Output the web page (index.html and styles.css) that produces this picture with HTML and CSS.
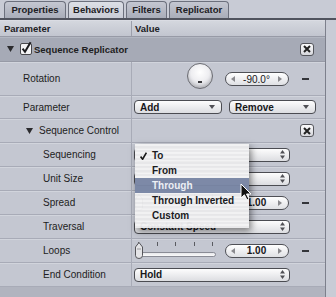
FILE: index.html
```html
<!DOCTYPE html>
<html lang="en">
<head>
    <meta charset="UTF-8">
    <meta name="viewport" content="width=device-width, initial-scale=1.0">
    <title>Behaviors Inspector</title>
    <link rel="stylesheet" href="styles.css">
</head>
<body>
    <div class="tabs">
        <div class="tab tab-properties">Properties</div>
        <div class="tab tab-behaviors active">Behaviors</div>
        <div class="tab tab-filters">Filters</div>
        <div class="tab tab-replicator">Replicator</div>
    </div>

    <div class="inspector">
        <div class="table">
            <div class="row header">
                <div class="label">Parameter</div>
                <div class="value">Value</div>
            </div>

            <div class="row group">
                <div class="label level-0">
                    <svg class="disclosure" width="7" height="6" viewBox="0 0 7 6"><polygon points="0,0 7,0 3.5,6" fill="#2b2b2e"/></svg>
                    <svg class="checkbox" width="12" height="14" viewBox="0 0 12 14">
                        <rect x="0.5" y="2.5" width="11" height="11" rx="1.5" fill="#f3f3f5" stroke="#48484c"/>
                        <path d="M2.6 7.6 L5 10.8 L10.6 1.2" stroke="#1b1b1e" stroke-width="2" fill="none"/>
                    </svg>
                    <span class="bold">Sequence Replicator</span>
                </div>
                <div class="value">
                    <span class="xbtn"><svg width="8" height="8" viewBox="0 0 8 8"><path d="M1 1L7 7M7 1L1 7" stroke="#222" stroke-width="2"/></svg></span>
                </div>
            </div>

            <div class="row rotation">
                <div class="label level-1">Rotation</div>
                <div class="value">
                    <div class="dial"><span class="dial-mark"></span></div>
                    <div class="field field-rotation">
                        <svg width="4" height="6" viewBox="0 0 4 6"><polygon points="4,0 4,6 0,3" fill="#8a8a8e"/></svg>
                        <span>-90.0°</span>
                        <svg width="4" height="6" viewBox="0 0 4 6"><polygon points="0,0 0,6 4,3" fill="#8a8a8e"/></svg>
                    </div>
                    <span class="minus"></span>
                </div>
            </div>

            <div class="row short">
                <div class="label level-1">Parameter</div>
                <div class="value">
                    <div class="popup popup-add">
                        <span>Add</span>
                        <svg width="6" height="4" viewBox="0 0 6 4"><polygon points="0,0 6,0 3,4" fill="#505055"/></svg>
                    </div>
                    <div class="popup popup-remove">
                        <span>Remove</span>
                        <svg width="6" height="4" viewBox="0 0 6 4"><polygon points="0,0 6,0 3,4" fill="#505055"/></svg>
                    </div>
                </div>
            </div>

            <div class="row">
                <div class="label level-2">
                    <svg class="disclosure" width="7" height="6" viewBox="0 0 7 6"><polygon points="0,0 7,0 3.5,6" fill="#2b2b2e"/></svg>
                    <span>Sequence Control</span>
                </div>
                <div class="value">
                    <span class="xbtn"><svg width="8" height="8" viewBox="0 0 8 8"><path d="M1 1L7 7M7 1L1 7" stroke="#222" stroke-width="2"/></svg></span>
                </div>
            </div>

            <!-- the values of these two popups sit under the open menu -->
            <div class="row">
                <div class="label level-3">Sequencing</div>
                <div class="value">
                    <div class="popup popup-wide">
                        <span></span>
                        <svg width="5" height="9" viewBox="0 0 5 9"><polygon points="0,3.5 5,3.5 2.5,0" fill="#505055"/><polygon points="0,5.5 5,5.5 2.5,9" fill="#505055"/></svg>
                    </div>
                </div>
            </div>

            <div class="row">
                <div class="label level-3">Unit Size</div>
                <div class="value">
                    <div class="popup popup-wide">
                        <span></span>
                        <svg width="5" height="9" viewBox="0 0 5 9"><polygon points="0,3.5 5,3.5 2.5,0" fill="#505055"/><polygon points="0,5.5 5,5.5 2.5,9" fill="#505055"/></svg>
                    </div>
                </div>
            </div>

            <div class="row">
                <div class="label level-3">Spread</div>
                <div class="value">
                    <div class="slider">
                        <div class="ticks"><i></i><i></i><i></i><i></i><i></i></div>
                        <div class="track"></div>
                        <svg class="knob" width="8" height="17" viewBox="0 0 8 17">
                            <path d="M4 0.5 L7.5 5 V13.5 Q7.5 16.5 4 16.5 Q0.5 16.5 0.5 13.5 V5 Z" fill="#e4e4e7" stroke="#55555a"/>
                        </svg>
                    </div>
                    <div class="field field-slider">
                        <svg width="4" height="6" viewBox="0 0 4 6"><polygon points="4,0 4,6 0,3" fill="#8a8a8e"/></svg>
                        <span class="bold">1.00</span>
                        <svg width="4" height="6" viewBox="0 0 4 6"><polygon points="0,0 0,6 4,3" fill="#8a8a8e"/></svg>
                    </div>
                    <span class="minus"></span>
                </div>
            </div>

            <div class="row">
                <div class="label level-3">Traversal</div>
                <div class="value">
                    <div class="popup popup-wide">
                        <span>Constant Speed</span>
                        <svg width="5" height="9" viewBox="0 0 5 9"><polygon points="0,3.5 5,3.5 2.5,0" fill="#505055"/><polygon points="0,5.5 5,5.5 2.5,9" fill="#505055"/></svg>
                    </div>
                </div>
            </div>

            <div class="row">
                <div class="label level-3">Loops</div>
                <div class="value">
                    <div class="slider">
                        <div class="ticks"><i></i><i></i><i></i><i></i><i></i></div>
                        <div class="track"></div>
                        <svg class="knob" width="8" height="17" viewBox="0 0 8 17">
                            <path d="M4 0.5 L7.5 5 V13.5 Q7.5 16.5 4 16.5 Q0.5 16.5 0.5 13.5 V5 Z" fill="#e4e4e7" stroke="#55555a"/>
                            <path d="M2 7 H6" stroke="#9a9a9f"/>
                        </svg>
                    </div>
                    <div class="field field-slider">
                        <svg width="4" height="6" viewBox="0 0 4 6"><polygon points="4,0 4,6 0,3" fill="#8a8a8e"/></svg>
                        <span class="bold">1.00</span>
                        <svg width="4" height="6" viewBox="0 0 4 6"><polygon points="0,0 0,6 4,3" fill="#8a8a8e"/></svg>
                    </div>
                    <span class="minus"></span>
                </div>
            </div>

            <div class="row">
                <div class="label level-3">End Condition</div>
                <div class="value">
                    <div class="popup popup-wide">
                        <span>Hold</span>
                        <svg width="5" height="9" viewBox="0 0 5 9"><polygon points="0,3.5 5,3.5 2.5,0" fill="#505055"/><polygon points="0,5.5 5,5.5 2.5,9" fill="#505055"/></svg>
                    </div>
                </div>
            </div>

            <div class="footer"></div>
        </div>
        <div class="scroll"></div>
    </div>

    <div class="menu">
        <div class="menu-item">
            <svg width="7" height="8" viewBox="0 0 7 8"><path d="M0.6 4.6 L2.6 7.2 L6.4 0.6" stroke="#111" stroke-width="1.6" fill="none"/></svg>
            <span>To</span>
        </div>
        <div class="menu-item"><i></i><span>From</span></div>
        <div class="menu-item selected"><i></i><span>Through</span></div>
        <div class="menu-item"><i></i><span>Through Inverted</span></div>
        <div class="menu-item"><i></i><span>Custom</span></div>
    </div>

    <svg class="cursor" width="12" height="18" viewBox="0 0 12 18">
        <path d="M1 1 L1 15 L4.4 11.8 L7 17 L9 16 L6.5 11 L11 11 Z" fill="#111" stroke="#fff" stroke-width="1"/>
    </svg>
</body>
</html>
```

FILE: styles.css
```css
* {
    box-sizing: border-box;
}
body {
    margin: 0;
    width: 336px;
    height: 297px;
    overflow: hidden;
    background-color: #c8cbd5;
    font-family: "Liberation Sans", Arial, sans-serif;
    font-size: 10px;
    color: #1d1d21;
    position: relative;
}
.bold {
    font-weight: bold;
}

/* tabs */
.tabs {
    display: flex;
    gap: 2px;
    height: 20px;
    padding: 1px 0 0 4px;
    border-bottom: 2px solid #50535e;
    background-color: #c8cbd5;
}
.tab {
    height: 17px;
    border: 1px solid #6c707d;
    border-bottom: none;
    border-radius: 4px 4px 0 0;
    background: linear-gradient(#c4c7d1, #a9adb9);
    font-size: 9.5px;
    font-weight: bold;
    color: #202024;
    text-align: center;
    line-height: 16px;
}
.tab.active {
    background: linear-gradient(#dcdfe6, #c9ccd6);
}
.tab-properties { width: 62px; }
.tab-behaviors { width: 56px; }
.tab-filters { width: 41px; }
.tab-replicator { width: 60px; }

/* inspector table */
.inspector {
    display: flex;
    height: 277px;
}
.table {
    width: 326px;
    border-right: 1px solid #7d808c;
    display: flex;
    flex-direction: column;
}
.scroll {
    flex: 1;
    background-color: #c9ccd6;
}
.row {
    display: grid;
    grid-template-columns: 132px 1fr;
    height: 24px;
    flex: none;
    background-color: #c4c7d1;
    border-bottom: 1px solid #a8abb7;
    box-shadow: inset 0 1px 0 #d1d4dc;
}
.row .label {
    display: flex;
    align-items: center;
    border-right: 1px solid #a8abb7;
}
.row .value {
    display: flex;
    align-items: center;
    padding-left: 2px;
}
.header {
    height: 17px;
    border-top: 1px solid #dadce3;
    border-bottom: 1px solid #979aa6;
    background: linear-gradient(#d4d7de, #c2c5cf);
    box-shadow: none;
    font-size: 9.5px;
    font-weight: bold;
    color: #202024;
}
.header .label {
    padding-left: 4px;
    border-right-color: #9c9fab;
}
.header .value {
    padding-left: 3px;
}
.group {
    height: 25px;
    background-color: #a6aab6;
    border-bottom-color: #979aa6;
    box-shadow: inset 0 1px 0 #b2b6c1;
    font-size: 9.5px;
}
.group .label {
    border-right: none;
}
.rotation {
    height: 34px;
}
.short {
    height: 23px;
}
.footer {
    flex: 1;
    background-color: #b1b4bf;
}

/* label indents */
.level-0 {
    padding-left: 7px;
}
.level-0 .disclosure {
    margin-right: 6px;
}
.level-0 .checkbox {
    margin-right: 2px;
    margin-top: -2px;
}
.level-1 {
    padding-left: 23px;
}
.level-2 {
    padding-left: 26px;
}
.level-2 .disclosure {
    margin-right: 6px;
}
.level-3 {
    padding-left: 43px;
}

/* controls */
.xbtn {
    width: 14px;
    height: 13px;
    margin-left: auto;
    margin-right: 11px;
    border: 1px solid #55565c;
    border-radius: 3px;
    background: linear-gradient(#fbfbfc, #d6d7dc);
    display: flex;
    align-items: center;
    justify-content: center;
}
.rotation .value {
    align-items: flex-start;
}
.dial {
    width: 26px;
    height: 26px;
    margin: 1px 0 0 53px;
    border: 1px solid #6b6c72;
    border-radius: 50%;
    background: radial-gradient(circle at 50% 35%, #ffffff 0%, #eeeef1 45%, #b3b5bd 100%);
    box-shadow: inset 0 -2px 3px rgba(0, 0, 0, 0.12);
    display: flex;
    align-items: flex-end;
    justify-content: center;
    padding-bottom: 5px;
}
.dial-mark {
    width: 4px;
    height: 2px;
    background-color: #3a3a3e;
}
.field {
    width: 64px;
    height: 14px;
    border: 1px solid #4f5056;
    border-radius: 7px;
    background: linear-gradient(#ffffff, #dfe0e4);
    display: flex;
    align-items: center;
    justify-content: space-between;
    padding: 0 6px 0 5px;
    color: #17171a;
}
.field-rotation {
    margin: 10px 0 0 12px;
}
.field-slider {
    margin-left: 9px;
}
.minus {
    width: 7px;
    height: 2px;
    margin-left: 13px;
    background-color: #34353a;
}
.rotation .minus {
    margin-top: 16px;
}
.popup {
    height: 14px;
    border: 1px solid #4b4c52;
    border-radius: 4px;
    background: linear-gradient(#fdfdfd, #dcdde1);
    display: flex;
    align-items: center;
    justify-content: space-between;
    padding: 0 6px 0 5px;
    font-weight: bold;
    color: #17171a;
}
.popup-add {
    width: 88px;
}
.popup-remove {
    width: 87px;
    margin-left: 7px;
}
.popup-wide {
    width: 156px;
    padding-right: 4px;
}
.slider {
    position: relative;
    width: 81px;
    height: 18px;
    margin-left: 1px;
}
.ticks {
    display: flex;
    justify-content: space-between;
    height: 5px;
    padding: 0 3px;
}
.ticks i {
    width: 1px;
    height: 4px;
    background-color: #5a5b61;
}
.track {
    height: 5px;
    margin-top: 5px;
    border: 1px solid #8a8c96;
    border-radius: 3px;
    background: linear-gradient(#e6e7ea, #fafafb);
}
.knob {
    position: absolute;
    left: 0;
    top: 0;
}

/* popup menu */
.menu {
    position: absolute;
    left: 135px;
    top: 144px;
    width: 114px;
    height: 84px;
    padding-top: 4px;
    background: repeating-linear-gradient(#f3f3f4 0, #f3f3f4 2px, #e9e9eb 2px, #e9e9eb 4px);
    opacity: 0.96;
    box-shadow: 2px 3px 7px rgba(0, 0, 0, 0.5);
    font-weight: bold;
    color: #151518;
}
.menu-item {
    display: grid;
    grid-template-columns: 17px 1fr;
    align-items: center;
    height: 15px;
}
.menu-item svg {
    justify-self: center;
}
.menu-item.selected {
    background-color: #7986a5;
    color: #eef1f7;
}
.cursor {
    position: absolute;
    left: 240px;
    top: 183px;
}
```
